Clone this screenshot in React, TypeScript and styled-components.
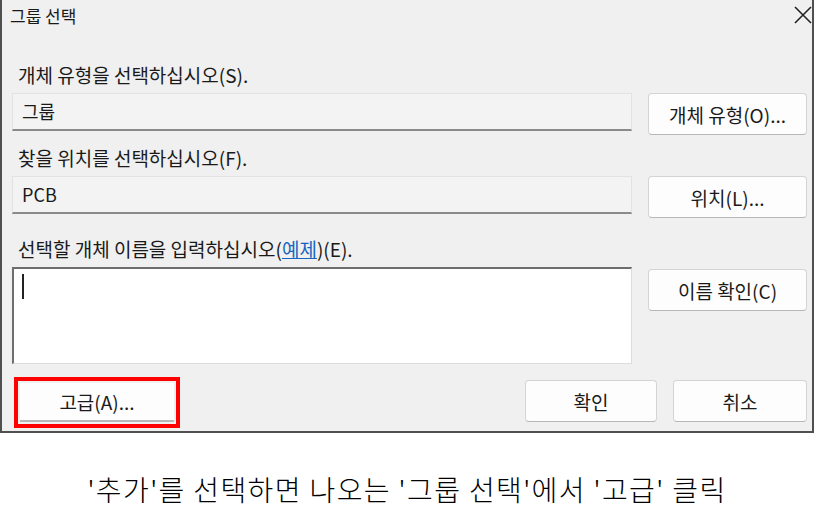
import React from 'react'
import styled, { createGlobalStyle } from 'styled-components'

const GlobalStyle = createGlobalStyle`
  body {
    margin: 0;
    background: #fff;
    font-family: "Noto Sans CJK KR", "Noto Sans", sans-serif;
    color: #1a1a1a;
  }
`

const Page = styled.div`
  width: 814px;
  height: 514px;
  display: flex;
  flex-direction: column;
`

const Window = styled.div`
  box-sizing: border-box;
  width: 814px;
  height: 433px;
  background: #f0f0f0;
  border-left: 2px solid #505050;
  border-right: 2px solid #505050;
  border-bottom: 2px solid #505050;
  display: flex;
  flex-direction: column;
`

const TitleBar = styled.div`
  height: 32px;
  display: flex;
  align-items: center;
  justify-content: space-between;
  padding: 0 0 0 8px;
`

const Title = styled.span`
  font-size: 17px;
  line-height: 32px;
`

const CloseIcon = styled.svg`
  width: 18px;
  height: 18px;
  margin-top: -2px;
`

const Body = styled.div`
  display: grid;
  grid-template-columns: 620px 159px;
  column-gap: 16px;
  padding: 0 5px 0 10px;
`

const Label = styled.div<{ top: number }>`
  grid-column: 1 / 3;
  font-size: 19px;
  line-height: 22px;
  height: 22px;
  padding-left: 6px;
  margin-top: ${({ top }) => top}px;
  margin-bottom: 7px;
`

const Link = styled.span`
  color: #1565c0;
  text-decoration: underline;
`

const Field = styled.div`
  box-sizing: border-box;
  height: 38px;
  background: #f3f3f3;
  border: 1px solid #e2e2e2;
  border-bottom: 2px solid #8a8a8a;
  font-size: 18px;
  line-height: 34px;
  padding-left: 9px;
`

const NameBox = styled.div`
  box-sizing: border-box;
  height: 97px;
  background: #fff;
  border-top: 2px solid #6e6e6e;
  border-left: 2px solid #6e6e6e;
  border-right: 1px solid #dcdcdc;
  border-bottom: 1px solid #dcdcdc;
  padding: 5px 0 0 8px;
`

const Caret = styled.div`
  width: 2px;
  height: 25px;
  background: #222;
`

const Button = styled.div<{ w?: number }>`
  box-sizing: border-box;
  height: 42px;
  width: ${({ w }) => (w ? `${w}px` : 'auto')};
  background: #fdfdfd;
  border: 1px solid #d4d4d4;
  border-bottom-color: #b8b8b8;
  border-radius: 4px;
  font-size: 19px;
  display: flex;
  align-items: center;
  justify-content: center;
`

const RightCell = styled.div<{ offset?: number }>`
  margin-top: ${({ offset }) => offset || 0}px;
  display: flex;
  flex-direction: column;
`

const Footer = styled.div`
  display: flex;
  align-items: center;
  justify-content: space-between;
  padding: 13px 5px 0 12px;
`

const Highlight = styled.div`
  border: 4px solid #ff0000;
  padding: 2px;
  display: flex;
`

const FlatButton = styled(Button)`
  border-radius: 0;
  border: none;
  border-bottom: 2px solid #b8b8b8;
  height: 39px;
`

const FooterRight = styled.div`
  display: flex;
  gap: 16px;
  margin-top: -3px;
`

const Caption = styled.div`
  flex: 1;
  display: flex;
  align-items: center;
  justify-content: center;
  font-size: 28px;
  font-weight: 300;
  letter-spacing: 1.4px;
  color: #000;
  padding-top: 30px;
`

export default function App() {
  return (
    <Page>
      <GlobalStyle />
      <Window>
        <TitleBar>
          <Title>그룹 선택</Title>
          <CloseIcon viewBox="0 0 18 18">
            <path d="M1 1 L17 17 M17 1 L1 17" stroke="#222" strokeWidth="1.6" fill="none" />
          </CloseIcon>
        </TitleBar>
        <Body>
          <Label top={32}>개체 유형을 선택하십시오(S).</Label>
          <Field>그룹</Field>
          <RightCell>
            <Button>개체 유형(O)...</Button>
          </RightCell>

          <Label top={12}>찾을 위치를 선택하십시오(F).</Label>
          <Field>PCB</Field>
          <RightCell>
            <Button>위치(L)...</Button>
          </RightCell>

          <Label top={20}>
            선택할 개체 이름을 입력하십시오(<Link>예제</Link>)(E).
          </Label>
          <NameBox>
            <Caret />
          </NameBox>
          <RightCell offset={2}>
            <Button>이름 확인(C)</Button>
          </RightCell>
        </Body>
        <Footer>
          <Highlight>
            <FlatButton w={154}>고급(A)...</FlatButton>
          </Highlight>
          <FooterRight>
            <Button w={132}>확인</Button>
            <Button w={134}>취소</Button>
          </FooterRight>
        </Footer>
      </Window>
      <Caption>'추가'를 선택하면 나오는 '그룹 선택'에서 '고급' 클릭</Caption>
    </Page>
  )
}
